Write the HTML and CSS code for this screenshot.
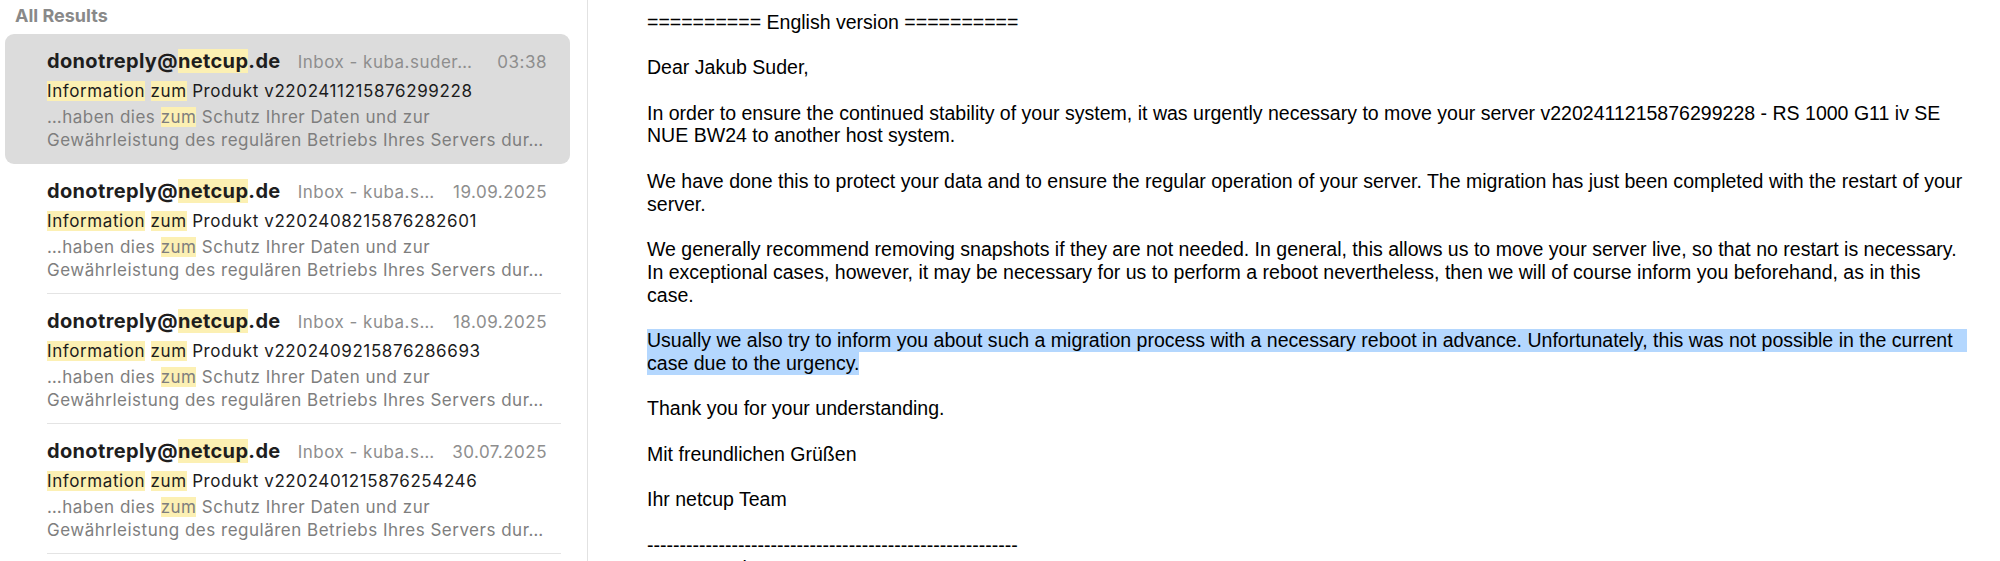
FILE: index.html
```html
<!DOCTYPE html>
<html lang="de">
<head>
<meta charset="utf-8">
<title>Mail – All Results</title>
<link rel="stylesheet" href="styles.css">
</head>
<body>
<div class="app">
  <aside class="list-pane">
    <div class="section-title">All Results</div>
    <ul class="results">
      <li class="msg selected">
        <div class="msg-body">
          <div class="msg-head">
            <span class="sender">donotreply@<mark>netcup</mark>.de</span>
            <span class="mailbox">Inbox - kuba.suder…</span>
            <span class="date">03:38</span>
          </div>
          <div class="subject"><mark>Information</mark> <mark>zum</mark> Produkt v2202411215876299228</div>
          <div class="preview">…haben dies <mark>zum</mark> Schutz Ihrer Daten und zur Gewährleistung des regulären Betriebs Ihres Servers dur…</div>
        </div>
      </li>
      <li class="msg">
        <div class="msg-body">
          <div class="msg-head">
            <span class="sender">donotreply@<mark>netcup</mark>.de</span>
            <span class="mailbox">Inbox - kuba.s…</span>
            <span class="date">19.09.2025</span>
          </div>
          <div class="subject"><mark>Information</mark> <mark>zum</mark> Produkt v2202408215876282601</div>
          <div class="preview">…haben dies <mark>zum</mark> Schutz Ihrer Daten und zur Gewährleistung des regulären Betriebs Ihres Servers dur…</div>
        </div>
      </li>
      <li class="msg">
        <div class="msg-body">
          <div class="msg-head">
            <span class="sender">donotreply@<mark>netcup</mark>.de</span>
            <span class="mailbox">Inbox - kuba.s…</span>
            <span class="date">18.09.2025</span>
          </div>
          <div class="subject"><mark>Information</mark> <mark>zum</mark> Produkt v2202409215876286693</div>
          <div class="preview">…haben dies <mark>zum</mark> Schutz Ihrer Daten und zur Gewährleistung des regulären Betriebs Ihres Servers dur…</div>
        </div>
      </li>
      <li class="msg">
        <div class="msg-body">
          <div class="msg-head">
            <span class="sender">donotreply@<mark>netcup</mark>.de</span>
            <span class="mailbox">Inbox - kuba.s…</span>
            <span class="date">30.07.2025</span>
          </div>
          <div class="subject"><mark>Information</mark> <mark>zum</mark> Produkt v2202401215876254246</div>
          <div class="preview">…haben dies <mark>zum</mark> Schutz Ihrer Daten und zur Gewährleistung des regulären Betriebs Ihres Servers dur…</div>
        </div>
      </li>
    </ul>
  </aside>
  <main class="reader">
    <p>========== English version ==========</p>
    <p>Dear Jakub Suder,</p>
    <p>In order to ensure the continued stability of your system, it was urgently necessary to move your server v2202411215876299228 - RS 1000 G11 iv SE NUE BW24 to another host system.</p>
    <p>We have done this to protect your data and to ensure the regular operation of your server. The migration has just been completed with the restart of your server.</p>
    <p>We generally recommend removing snapshots if they are not needed. In general, this allows us to move your server live, so that no restart is necessary. In exceptional cases, however, it may be necessary for us to perform a reboot nevertheless, then we will of course inform you beforehand, as in this case.</p>
    <p class="selection"><span class="sel-line">Usually we also try to inform you about such a migration process with a necessary reboot in advance. Unfortunately, this was not possible in the current</span><span class="sel">case due to the urgency.</span></p>
    <p>Thank you for your understanding.</p>
    <p>Mit freundlichen Grüßen</p>
    <p>Ihr netcup Team</p>
    <p>---------------------------------------------------------<br>netcup GmbH</p>
  </main>
</div>
</body>
</html>
```

FILE: styles.css
```css
* {
  box-sizing: border-box;
}

html, body {
  margin: 0;
  padding: 0;
  background: #ffffff;
}

.app {
  display: flex;
  height: 561px;
  overflow: hidden;
}

/* ---------- message list ---------- */
.list-pane {
  width: 588px;
  flex: none;
  border-right: 1px solid #e2e2e2;
  font-family: Inter, "Noto Sans", sans-serif;
  background: #ffffff;
}

.section-title {
  padding: 5px 0 0 15px;
  height: 34px;
  font-size: 18px;
  line-height: 22px;
  font-weight: 700;
  color: #898989;
}

.results {
  list-style: none;
  margin: 0;
  padding: 0 17px 0 5px;
}

.msg {
  height: 130px;
  padding-left: 42px;
  border-radius: 9px;
}

.msg.selected {
  background: #dcdcdc;
}

.msg-body {
  height: 130px;
  margin-right: 9px;
  padding: 15px 14px 0 0;
  border-bottom: 1px solid #e4e4e4;
}

.msg.selected .msg-body {
  border-bottom-color: transparent;
}

.msg-head {
  display: flex;
  align-items: baseline;
  gap: 17px;
  height: 24px;
  white-space: nowrap;
}

.sender {
  font-size: 20px;
  line-height: 24px;
  font-weight: 700;
  letter-spacing: 0.35px;
  color: #1e1e1e;
  flex: none;
}

.mailbox {
  flex: 1 1 auto;
  min-width: 0;
  overflow: hidden;
  text-overflow: ellipsis;
  font-size: 17px;
  letter-spacing: 0.5px;
  color: #8e8e8e;
}

.date {
  flex: none;
  margin-left: auto;
  font-size: 17px;
  letter-spacing: 0.5px;
  color: #8e8e8e;
}

.subject {
  margin-top: 7px;
  font-size: 17px;
  line-height: 22px;
  letter-spacing: 0.6px;
  color: #1c1c1c;
  white-space: nowrap;
  overflow: hidden;
}

.preview {
  margin-top: 4px;
  font-size: 17px;
  line-height: 23px;
  letter-spacing: 0.5px;
  color: #7e7e7e;
  display: -webkit-box;
  -webkit-line-clamp: 2;
  -webkit-box-orient: vertical;
  overflow: hidden;
}

mark {
  background: #fcf0b3;
  color: inherit;
}

/* ---------- reading pane ---------- */
.reader {
  flex: 1;
  min-width: 0;
  padding: 10.6px 33px 0 59px;
  font-family: "Liberation Sans", Arial, sans-serif;
  font-size: 19.55px;
  line-height: 22.75px;
  color: #000000;
}

.reader p {
  margin: 0 0 22.75px;
}

.sel-line {
  display: block;
  background: #b4d7fe;
}

.sel {
  background: #b4d7fe;
  padding: 1px 0;
}
```
